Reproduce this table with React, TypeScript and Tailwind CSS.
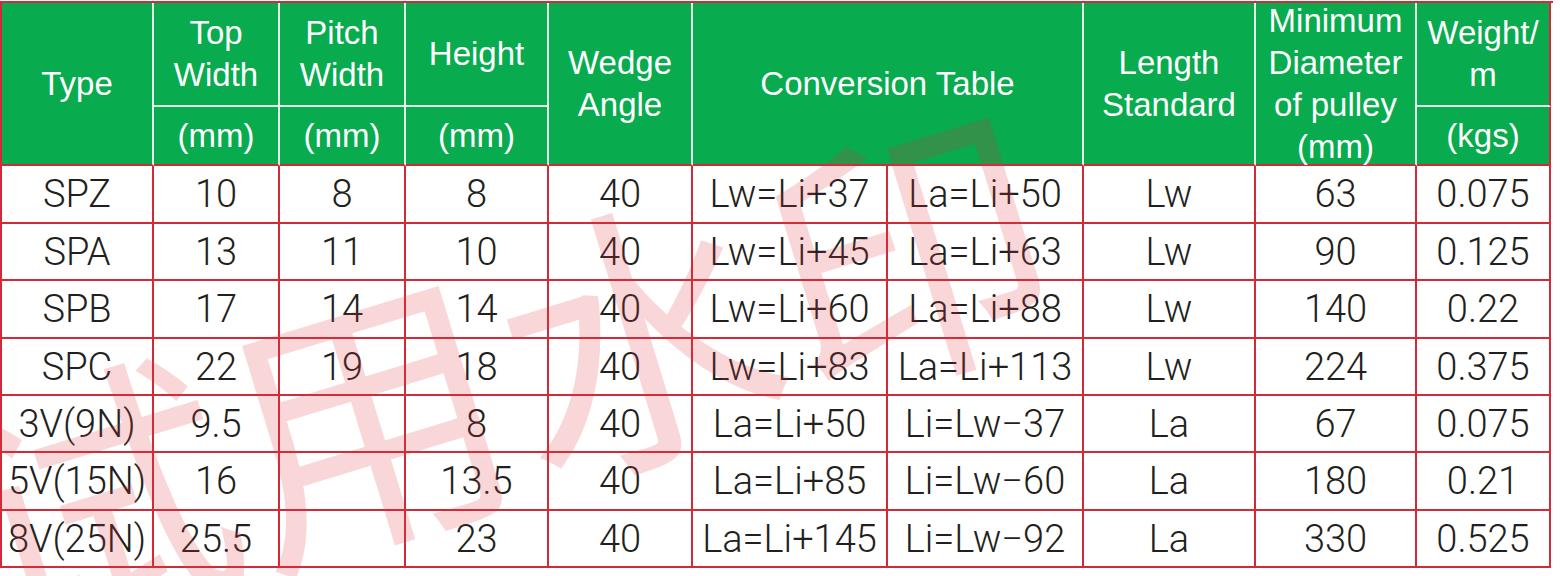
import React from "react";

const rows = [
  ["SPZ", "10", "8", "8", "40", "Lw=Li+37", "La=Li+50", "Lw", "63", "0.075"],
  ["SPA", "13", "11", "10", "40", "Lw=Li+45", "La=Li+63", "Lw", "90", "0.125"],
  ["SPB", "17", "14", "14", "40", "Lw=Li+60", "La=Li+88", "Lw", "140", "0.22"],
  ["SPC", "22", "19", "18", "40", "Lw=Li+83", "La=Li+113", "Lw", "224", "0.375"],
  ["3V(9N)", "9.5", "", "8", "40", "La=Li+50", "Li=Lw\u221237", "La", "67", "0.075"],
  ["5V(15N)", "16", "", "13.5", "40", "La=Li+85", "Li=Lw\u221260", "La", "180", "0.21"],
  ["8V(25N)", "25.5", "", "23", "40", "La=Li+145", "Li=Lw\u221292", "La", "330", "0.525"],
];

const head =
  "flex items-center justify-center text-center bg-[#08ab4e] text-white border-r-2 border-b-2 leading-[42px]";
// spans both header rows
const full = `${head} row-span-2 border-r-[#e4f3e7] border-b-[#d42a37]`;
const top = `${head} border-r-[#e4f3e7] border-b-[#e4f3e7]`;
const bottom = `${head} border-r-[#e4f3e7] border-b-[#d42a37]`;

const cell =
  "flex items-center justify-center whitespace-nowrap pt-px border-r-2 border-b-2 border-[#d42a37] text-[#231f20] text-[38px] font-light font-['Roboto',sans-serif]";

export default function App() {
  return (
    <div className="relative w-[1560px] h-[576px] overflow-hidden bg-white pt-px">
      <div className="grid w-[1553px] grid-cols-[152px_126px_126px_143px_144px_195px_196px_172px_161px_134px] grid-rows-[104px_59px_58px_57px_58px_57px_57px_58px_57px] border-t-2 border-l-2 border-[#d42a37] font-['Liberation_Sans',Arial,sans-serif] text-[33px]">
        <div className={full}>Type</div>
        <div className={top}>Top<br />Width</div>
        <div className={top}>Pitch<br />Width</div>
        <div className={top}>Height</div>
        <div className={full}>Wedge<br />Angle</div>
        <div className={`${full} col-span-2`}>Conversion Table</div>
        <div className={full}>Length<br />Standard</div>
        <div className={full}>Minimum<br />Diameter<br />of pulley<br />(mm)</div>
        <div className={`${head} border-r-[#d42a37] border-b-[#e4f3e7]`}>Weight/<br />m</div>
        <div className={bottom}>(mm)</div>
        <div className={bottom}>(mm)</div>
        <div className={bottom}>(mm)</div>
        <div className={`${head} border-r-[#d42a37] border-b-[#d42a37]`}>(kgs)</div>

        {rows.map((r, i) =>
          r.map((v, j) => (
            <div key={`${i}-${j}`} className={cell}>
              {v}
            </div>
          ))
        )}
      </div>

      {/* trial watermark */}
      <div className="pointer-events-none absolute left-[500px] top-[365px] -translate-x-1/2 -translate-y-1/2 -rotate-[17deg] whitespace-nowrap text-[280px] leading-none tracking-[4px] text-[#e0303a]/20 font-['Noto_Sans_CJK_SC',sans-serif]">
        试用水印
      </div>
    </div>
  );
}
